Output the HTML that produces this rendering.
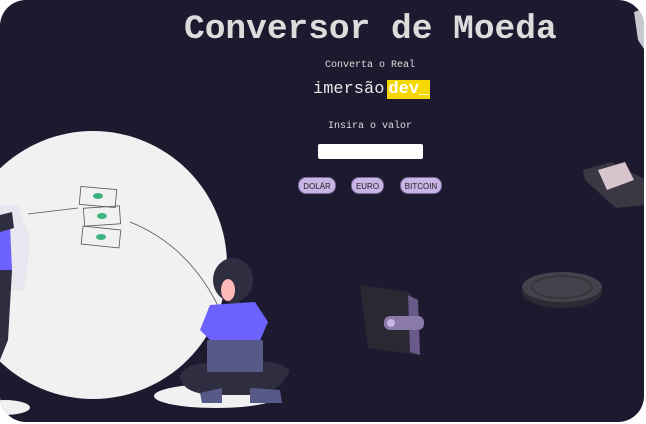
<!DOCTYPE html>
<html><head><style>
html,body{margin:0;padding:0;background:#fff;width:646px;height:424px;overflow:hidden}
#c{position:absolute;left:0;top:0;width:644px;height:422px;background:#1d1a2f;border-radius:26px;overflow:hidden;font-family:"Liberation Mono",monospace}
.a{position:absolute}
h1{position:absolute;left:184px;top:10px;margin:0;font-size:34.5px;font-weight:bold;color:#dcdcdc;white-space:nowrap}
.t{color:#ddd;font-size:10px;text-align:center;width:646px;left:47px}
.btn{position:absolute;top:177px;height:17px;background:#c9b4e6;border-radius:8px;font-family:"Liberation Sans",sans-serif;font-size:8px;color:#222;line-height:17px;text-align:center;border:1px solid #7a6a9a;box-sizing:border-box}
</style></head><body><div id="c">
<div class="a" style="left:-41px;top:131px;width:268px;height:268px;border-radius:50%;background:#f1f1f2"></div>
<div class="a" style="left:154px;top:384px;width:124px;height:24px;border-radius:50%;background:#f1f1f2"></div>
<div class="a" style="left:-20px;top:400px;width:50px;height:15px;border-radius:50%;background:#f1f1f2"></div>
<h1>Conversor de Moeda</h1>
<div class="a t" style="top:60px;">Converta o Real</div>
<div class="a" style="left:313px;top:80px;font-size:17px;color:#e6e6e6;white-space:nowrap">imersão<span style="background:#f5d800;color:#fff;font-weight:bold;margin-left:3px;padding:0 1px">dev_</span></div>
<div class="a t" style="top:121px;">Insira o valor</div>
<div class="a" style="left:318px;top:144px;width:105px;height:15px;background:#fff;border-radius:2px"></div>
<div class="btn" style="left:298px;width:38px">DOLÁR</div>
<div class="btn" style="left:351px;width:33px">EURO</div>
<div class="btn" style="left:400px;width:42px">BITCOIN</div>
<svg class="a" style="left:0;top:0" width="646" height="424">
<g fill="none" stroke="#555" stroke-width="0.8">
<rect x="80" y="188" width="36" height="18" transform="rotate(5 98 197)"/>
<rect x="84" y="207" width="36" height="18" transform="rotate(-4 102 216)"/>
<rect x="82" y="228" width="38" height="18" transform="rotate(6 101 237)"/>
<path d="M230 334 Q200 250 130 222"/><path d="M78 208 L28 214"/>
</g>
<g fill="#3db27f"><ellipse cx="98" cy="196" rx="5" ry="3"/><ellipse cx="102" cy="216" rx="5" ry="3"/><ellipse cx="101" cy="237" rx="5" ry="3"/></g>
<path d="M0 205 L18 205 L30 238 L25 290 L10 290 L0 300Z" fill="#e8e6ee"/>
<path d="M0 225 L10 225 L12 270 L0 270Z" fill="#6c63ff"/>
<path d="M0 270 L12 270 L8 340 L0 360Z" fill="#2f2e41"/>
<path d="M0 215 L12 212 L14 228 L0 232Z" fill="#2f2e41"/>
<ellipse cx="233" cy="280" rx="20" ry="22" fill="#2f2e41"/>
<path d="M215 270 Q212 300 235 305 Q262 300 265 322 L248 312 Z" fill="#2f2e41"/>
<ellipse cx="228" cy="290" rx="7" ry="11" fill="#ffb8b8"/>
<path d="M210 305 L255 302 L268 322 L258 345 L215 345 L200 330 Z" fill="#6c63ff"/>
<path d="M180 375 Q190 358 230 365 Q270 355 290 370 Q280 395 250 395 L210 395 Q180 392 180 375Z" fill="#2f2e41"/>
<rect x="207" y="340" width="56" height="32" rx="2" fill="#575a89"/>
<path d="M200 393 L222 388 L222 403 L202 403Z M250 388 L280 390 L282 403 L250 403Z" fill="#575a89"/>
<path d="M360 285 L410 292 L418 355 L368 348Z" fill="#2a2833"/>
<path d="M408 295 L418 300 L420 355 L410 352Z" fill="#6a5a8a"/>
<rect x="384" y="316" width="40" height="14" rx="6" fill="#8a7aa8"/>
<circle cx="391" cy="323" r="4" fill="#c9b4e6"/>
<ellipse cx="562" cy="292" rx="40" ry="16" fill="#2c2a33"/>
<ellipse cx="562" cy="287" rx="40" ry="15" fill="#44424c"/>
<ellipse cx="562" cy="287" rx="30" ry="11" fill="none" stroke="#333" stroke-width="1.5"/>
<path d="M583 170 L612 162 L646 180 L646 205 L616 208 L585 180Z" fill="#3a3842"/>
<path d="M598 170 L625 162 L634 180 L607 190Z" fill="#d8c4cc"/>
<path d="M634 12 L646 8 L646 52 L638 40Z" fill="#c8c8d0"/>
</svg>
</div></body></html>
